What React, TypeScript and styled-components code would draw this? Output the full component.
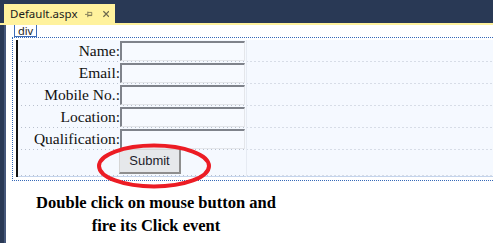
import styled, { createGlobalStyle } from "styled-components";

const GlobalStyle = createGlobalStyle`
  html, body { margin: 0; padding: 0; background: #fff; }
  body { width: 493px; height: 243px; overflow: hidden; }
`;

const Window = styled.div`
  width: 493px;
  height: 243px;
  display: flex;
  flex-direction: column;
  background: #293955;
  overflow: hidden;
`;

const TabBar = styled.div`
  height: 23px;
  padding-left: 4px;
  display: flex;
  align-items: flex-end;
  flex-shrink: 0;
`;

const Tab = styled.div`
  width: 111px;
  height: 19px;
  box-sizing: border-box;
  background: #fff29d;
  display: flex;
  align-items: center;
  padding: 0 6px 0 6px;
  font-family: "Noto Sans", "Liberation Sans", sans-serif;
  font-size: 11.5px;
  color: #1b1b1b;
`;

const TabTitle = styled.span`
  flex: 1;
  white-space: nowrap;
`;

const TabIcon = styled.svg<{ $gap?: number }>`
  display: block;
  margin-left: ${(p) => p.$gap ?? 8}px;
`;

const TabLine = styled.div`
  height: 2px;
  background: #fff29d;
  flex-shrink: 0;
  position: relative;
  z-index: 1;
`;

const Main = styled.div`
  flex: 1;
  display: flex;
  min-height: 0;
`;

const Rail = styled.div`
  width: 4px;
  border-right: 2px solid #45577a;
  flex-shrink: 0;
`;

const Designer = styled.div`
  flex: 1;
  min-width: 0;
  background: #fff;
  position: relative;
`;

const TagRow = styled.div`
  height: 12px;
  display: flex;
  align-items: flex-start;
`;

const TagLabel = styled.div`
  margin-left: 8px;
  border: 1px solid #3d6cb8;
  border-top: none;
  font-family: "Noto Sans", "Liberation Sans", sans-serif;
  font-size: 11px;
  line-height: 11px;
  color: #1b1b1b;
  padding: 0 3px;
`;

const DivBox = styled.div`
  margin: 0 0 0 6px;
  width: 600px;
  border: 1px dotted #3568b8;
  padding: 2px 0 3px 3px;
`;

const FormTable = styled.table`
  width: 100%;
  border-collapse: collapse;
  background: #f5f9ff;
  border-left: 2px solid #111;
  border-bottom: 1px solid #c4d4ec;
`;

const dots = `linear-gradient(to right, #b9c1ce 1px, transparent 1px) 3px 100% / 4px 1px repeat-x`;

const LabelCell = styled.td`
  width: 102px;
  height: 21px;
  padding: 0 0 1px 0;
  text-align: right;
  font-family: "Liberation Serif", serif;
  font-size: 15.5px;
  color: #111;
  background: ${dots};
  vertical-align: middle;
`;

const InputCell = styled.td<{ $tall?: boolean }>`
  width: 126px;
  height: ${(p) => (p.$tall ? "25px" : "21px")};
  padding: 0 0 1px 0;
  border-right: 1px solid #e6ebf3;
  background: ${dots};
  vertical-align: ${(p) => (p.$tall ? "top" : "middle")};
`;

const FillCell = styled.td`
  padding: 0;
  background: ${dots};
`;

const TextInput = styled.input`
  display: block;
  width: 125px;
  height: 20px;
  box-sizing: border-box;
  margin: 0;
  background: #f7faff;
  border-style: solid;
  border-width: 2px 1px 1px 2px;
  border-color: #7f838b #e4e6ea #e4e6ea #7f838b;
  padding: 0;
`;

const SubmitButton = styled.button`
  display: block;
  width: 62px;
  height: 25px;
  margin: -1px 0 0 -1px;
  box-sizing: border-box;
  background: #e6e8eb;
  border-style: solid;
  border-width: 1px 2px 2px 1px;
  border-color: #d6d6d6 #8e8e8e #8e8e8e #d6d6d6;
  font-family: "Liberation Sans", Arial, sans-serif;
  font-size: 13px;
  color: #1c1c2c;
  padding: 0 0 1px 0;
`;

const Ring = styled.svg`
  position: absolute;
  left: 90px;
  top: 118px;
  pointer-events: none;
`;

const Caption = styled.p`
  margin: 10px 0 0 0;
  width: 300px;
  text-align: center;
  font-family: "Liberation Serif", serif;
  font-weight: bold;
  font-size: 16.5px;
  line-height: 23px;
  color: #000;
`;

const fields = ["Name:", "Email:", "Mobile No.:", "Location:", "Qualification:"];

export default function App() {
  return (
    <Window>
      <GlobalStyle />
      <TabBar>
        <Tab>
          <TabTitle>Default.aspx</TabTitle>
          <TabIcon width="9" height="8" viewBox="0 0 9 8">
            <path d="M0 4.5H3M3.5 1V8M3.5 2H8.5V6H3.5M3.5 5.5H8.5" stroke="#6e6a4e" strokeWidth="1" fill="none" />
          </TabIcon>
          <TabIcon $gap={10} width="8" height="8" viewBox="0 0 8 8">
            <path d="M0.5 0.5L7.5 7.5M7.5 0.5L0.5 7.5" stroke="#6e6a4e" strokeWidth="1.6" />
          </TabIcon>
        </Tab>
      </TabBar>
      <TabLine />
      <Main>
        <Rail />
        <Designer>
          <TagRow>
            <TagLabel>div</TagLabel>
          </TagRow>
          <DivBox>
            <FormTable>
              <tbody>
                {fields.map((f) => (
                  <tr key={f}>
                    <LabelCell>{f}</LabelCell>
                    <InputCell>
                      <TextInput type="text" />
                    </InputCell>
                    <FillCell />
                  </tr>
                ))}
                <tr>
                  <LabelCell />
                  <InputCell $tall>
                    <SubmitButton type="button">Submit</SubmitButton>
                  </InputCell>
                  <FillCell />
                </tr>
              </tbody>
            </FormTable>
          </DivBox>
          <Caption>
            Double click on mouse button and
            <br />
            fire its Click event
          </Caption>
          <Ring width="116" height="46" viewBox="0 0 116 46">
            <ellipse cx="58" cy="23" rx="55" ry="20.5" fill="none" stroke="#ec1c24" strokeWidth="4" />
          </Ring>
        </Designer>
      </Main>
    </Window>
  );
}
